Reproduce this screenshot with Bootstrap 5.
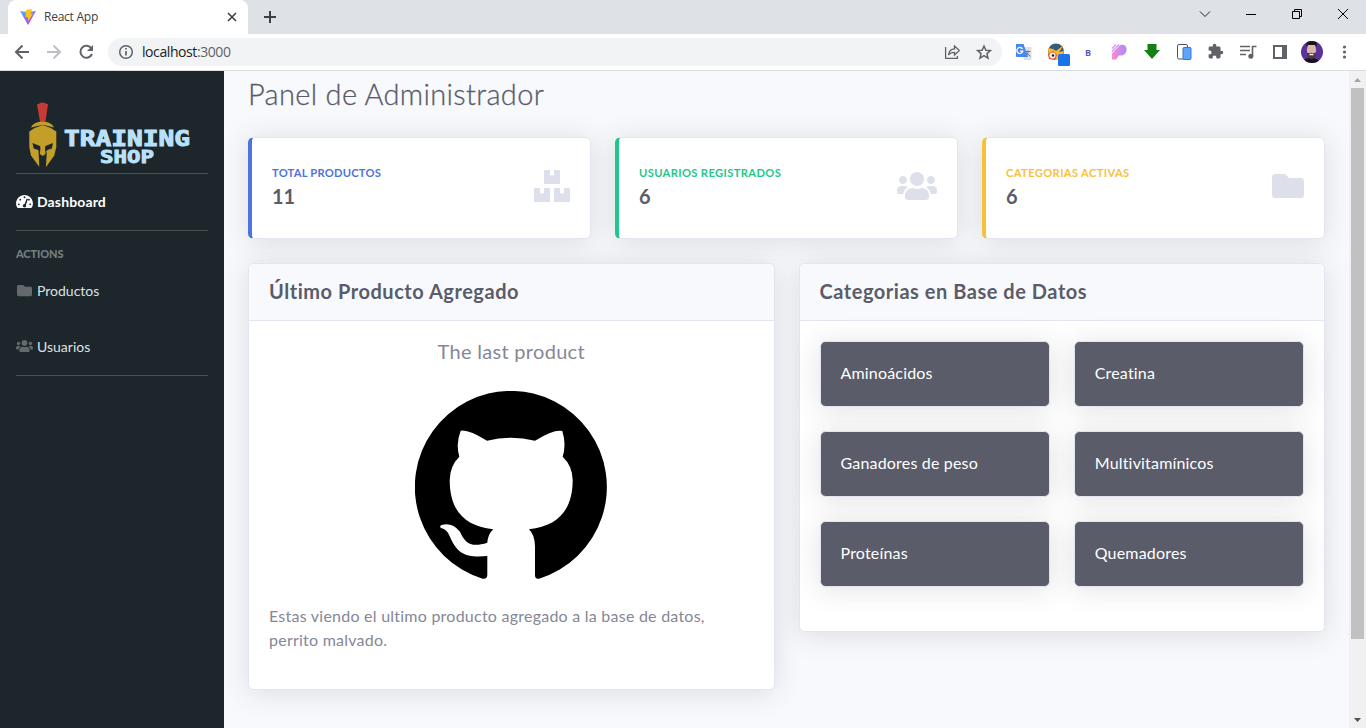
<!DOCTYPE html>
<html lang="es">
<head>
<meta charset="utf-8">
<title>React App</title>
<link href="https://cdn.jsdelivr.net/npm/bootstrap@5.3.0/dist/css/bootstrap.min.css" rel="stylesheet">
<style>
html,body{height:100%;overflow:hidden}
body{font-family:Lato,sans-serif;color:#858796;background:#f8f9fc;line-height:1.5}
svg{display:block;flex:none}
.browser{font-family:"Open Sans",sans-serif;color:#3c4043}
.tabstrip{height:34px;background:#dee1e6}
.browser-tab{width:240px;height:34px;margin-left:8px;border-radius:8px 8px 0 0;background:#fff;font-size:12px}
.tab-title{letter-spacing:-.25px}
.win{width:46px;height:29px}
.toolbar{height:37px;background:#fff;border-bottom:1px solid #dadce0;padding-right:7px}
.cell{width:32px;height:32px}
.omnibox{height:28px;border-radius:14px;background:#f1f3f4;font-size:14px;color:#202124;margin-right:5px;padding-right:2px}
.url{letter-spacing:-.42px;padding:0 0 1px 2px}
.url-port{color:#5f6368}
.page{height:657px}
.side{width:224px;background:#1c262b;color:#dfe1e2;font-size:14px}
.side hr{margin:0;border-top:1px solid #495155;opacity:1}
.side .nav-link{color:#dfe1e2;padding:0 0 2px;height:56px}
.side .nav-link.active{color:#fff;font-weight:700;letter-spacing:.14px}
.actions{height:32px;padding-top:14px;font-size:11px;font-weight:900;line-height:17px;color:#777d80;letter-spacing:-.1px}
.content{padding:0 24px}
.page-title{font-size:29px;font-weight:300;color:#5a5c69;line-height:34px;letter-spacing:.32px;margin:6px 0 26px;-webkit-text-stroke:.3px #5a5c69}
.panel{border:1px solid #e3e6f0;border-radius:.35rem;box-shadow:0 .15rem 1.75rem 0 rgba(58,59,69,.15)}
.stat{height:102px;border-left-width:4px}
.stat .card-body{padding:0 20px 4px}
.stat-blue{border-left-color:#4e73df}.stat-blue .stat-label{color:#4e73df;letter-spacing:.2px}
.stat-green{border-left-color:#1cc88a}.stat-green .stat-label{color:#1cc88a}
.stat-yellow{border-left-color:#f6c23e}.stat-yellow .stat-label{color:#f6c23e}
.stat-label{font-size:11.2px;font-weight:700;line-height:17px;letter-spacing:.35px}
.stat-value{font-size:20px;font-weight:700;color:#5a5c69;line-height:24px;margin-top:3px}
.stat svg{fill:#dddfeb}
.panel .card-header{height:57px;background:#f8f9fc;border-color:#e3e6f0;padding:0 20px 2px}
.panel .card-header h5{font-size:20px;font-weight:700;color:#5a5c69;letter-spacing:.53px}
.panel-body{padding:20px}
.product-name{font-size:20px;line-height:24px;letter-spacing:.3px;margin:-2px 0 28px}
.product-text{font-size:16px;letter-spacing:.24px;margin:21px 0 0}
.cat{height:66px;background:#5a5c69;color:#fff;font-size:16px;letter-spacing:.18px;padding:0 20px 2px}
.last{height:427px}.cats{height:369px}
.sbar{width:17px;background:#f1f1f1}
.thumb{width:13px;height:551px;background:#c1c1c1}
</style>
</head>
<body>
<div class="browser">
  <div class="tabstrip d-flex">
    <div class="browser-tab d-flex align-items-center ps-2">
      <svg class="ms-1" width="16" height="16" viewBox="0 0 16 16"><defs><linearGradient id="v" x1="0" x2=".7" y2="1"><stop stop-color="#41bdff"/><stop offset="1" stop-color="#bd34fe"/></linearGradient></defs><path d="M0 2l8 1 8-1-8 14z" fill="url(#v)"/><path d="M6 1l6-1-1.500 4.500H13L8 12.500V8H5.500z" fill="#ffc21c"/></svg>
      <span class="tab-title ms-2 flex-grow-1">React App</span>
      <svg class="me-2" width="16" height="16" stroke="#3c4043" stroke-width="1.600"><path d="M4 4l8 8M12 4l-8 8"/></svg>
    </div>
    <svg width="44" height="34" stroke="#3c4043" stroke-width="2"><path d="M16 17h12M22 11v12"/></svg>
    <div class="ms-auto d-flex">
      <svg class="win" fill="none" stroke="#222"><path d="M18 11.500l5 5 5-5"/></svg>
      <svg class="win" fill="none" stroke="#000"><path d="M18 14.500h10"/></svg>
      <svg class="win" fill="none" stroke="#000"><path d="M18.500 11.500h7v7h-7zM20.500 11V9.500h7v7H26"/></svg>
      <svg class="win" fill="none" stroke="#000"><path d="M18 9l10 10M28 9L18 19"/></svg>
    </div>
  </div>
  <div class="toolbar d-flex align-items-center">
    <div class="d-flex ps-2 ms-n1">
      <svg class="cell" viewBox="2 0 32 32" fill="none" stroke="#5f6368" stroke-width="2"><path d="M23 16H10M16.500 9.500L10 16l6.500 6.500"/></svg>
      <svg class="cell" viewBox="2 0 32 32" fill="none" stroke="#bdc1c6" stroke-width="2"><path d="M9 16h13M15.500 9.500L22 16l-6.500 6.500"/></svg>
      <svg class="cell" viewBox="2 0 32 32" fill="none" stroke="#5f6368" stroke-width="2"><path d="M21.500 12.500A6 6 0 1 0 22 18"/><path d="M23 9v6h-6z" fill="#5f6368" stroke="none"/></svg>
    </div>
    <div class="omnibox d-flex align-items-center flex-grow-1 ms-1">
      <svg class="ms-1" width="28" height="28" fill="none" stroke="#5f6368" stroke-width="1.500"><circle cx="14" cy="14" r="6.300"/><path d="M14 13v4.500M14 10v1.600" stroke-width="1.700"/></svg>
      <span class="url">localhost<span class="url-port">:3000</span></span>
      <div class="ms-auto d-flex">
        <svg class="cell" fill="none" stroke="#5f6368" stroke-width="1.300"><path d="M9.600 11v11.400h11.800V20M12.500 19c.5-4 2.500-6 6-6.200V10l4.800 4.600-4.800 4.400v-2.700c-3 0-4.800.8-6 2.700z"/></svg>
        <svg class="cell" fill="none" stroke="#5f6368" stroke-width="1.500"><path d="M16 10l1.900 4.200 4.500.4-3.400 3 1 4.500-4-2.400-4 2.400 1-4.500-3.400-3 4.500-.4z"/></svg>
      </div>
    </div>
    <div class="d-flex">
      <svg class="cell"><path d="M14 11h10.500v13H17z" fill="#dfe1e5"/><path d="M9 8h7.500l4.500 13H10a1 1 0 0 1-1-1z" fill="#4688f1"/><path d="M15.500 13a3 3 0 1 0 .3 2.200H13" fill="none" stroke="#fff" stroke-width="1.300"/><path d="M18.500 15.500h5M21 14.500v1c0 2-1 4-2 5M19.500 16.500l4 4" stroke="#607d8b" fill="none"/></svg>
      <svg class="cell"><circle cx="17" cy="15.500" r="8" fill="#355e76"/><path d="M9 12l5 1 3 2 8-6-5 7 5-1-3 8H10z" fill="#fcba2b"/><path d="M9 18l5-3 4 4-2 5-6-1z" fill="#e8492f"/><circle cx="13.500" cy="19.500" r="3" fill="#fff"/><circle cx="14" cy="19.500" r="1.300" fill="#222"/><rect x="19" y="18" width="12" height="12" rx="1.500" fill="#1a73e8"/></svg>
      <svg class="cell"><text x="14" y="19.500" font-size="9" font-weight="700" fill="#6259ba">B</text></svg>
      <svg class="cell"><defs><linearGradient id="p"><stop stop-color="#ff8ad1"/><stop offset="1" stop-color="#a68bfa"/></linearGradient></defs><path d="M9 23.500V17.500l8-8.500c4-1 7 1 6.500 5-.5 4-3.500 6-7.500 5.500l-3 4z" fill="url(#p)"/><path d="M9 15.500l7-7M9 12.500l4-4" stroke="#d69cf0" stroke-width="1.500"/></svg>
      <svg class="cell"><path d="M12.500 8h9v6H25l-8 9-8-9h3.500z" fill="#128012"/></svg>
      <svg class="cell"><rect x="10.500" y="8.500" width="10" height="14.500" rx="1.500" fill="#fff" stroke="#44546f"/><rect x="16" y="11.500" width="8" height="12" rx="1" fill="#5da4fa" stroke="#3d77c6"/></svg>
      <svg class="cell" viewBox="-5 -4 32 32"><path transform="translate(3.200 3) scale(.7)" fill="#5f6368" d="M20.500 11H19V7a2 2 0 0 0-2-2h-4V3.500a2.500 2.500 0 0 0-5 0V5H4a2 2 0 0 0-2 2v3.800h1.500a2.700 2.700 0 0 1 0 5.400H2V20a2 2 0 0 0 2 2h3.800v-1.500a2.700 2.700 0 0 1 5.400 0V22H17a2 2 0 0 0 2-2v-4h1.500a2.500 2.500 0 0 0 0-5z"/></svg>
      <svg class="cell" fill="none" stroke="#5f6368" stroke-width="1.600"><path d="M9 10.500h10M9 14.500h10M9 18.500h6M21.500 20.500V10.500h4"/><circle cx="19.800" cy="20.300" r="1.700" fill="#5f6368"/></svg>
      <svg class="cell"><path d="M10 9h14v14H10z" fill="#5f6368"/><path d="M12 11h7v10h-7z" fill="#fff"/></svg>
      <svg class="cell"><clipPath id="av"><circle cx="17" cy="16" r="11"/></clipPath><g clip-path="url(#av)"><path d="M6 5h22v22H6z" fill="#5c3199"/><path d="M7 28c1-5 5-6 9-6s8 1 10 6z" fill="#17131c"/><ellipse cx="16.500" cy="14" rx="4.600" ry="7" fill="#dcb7a5"/><path d="M11.500 11c-1-5 2-7 6-6 4 0 5 2 4 6l-1-2h-8z" fill="#1b151b"/><path d="M12 16c.5 1.500 1.500 1 4.500.8 3 .2 4 .7 4.500-.8 0 5-2 7-4.500 7s-4.500-2-4.500-7z" fill="#4a3836"/><path d="M14.500 18.500h4" stroke="#fff" stroke-width="1.500"/></g></svg>
      <svg class="cell" viewBox="-.5 0 32 32" fill="#5f6368"><circle cx="17" cy="11" r="1.600"/><circle cx="17" cy="16" r="1.600"/><circle cx="17" cy="21" r="1.600"/></svg>
    </div>
  </div>
</div>
<div class="page d-flex">
  <aside class="side flex-shrink-0 px-3">
    <svg width="192" height="102" viewBox="16 71 192 102">
      <path d="M37 104.500l2.500-1 .5-.8h5l.5.8 2.500.7-2.500 17.300h-5.500z" fill="#c83a34"/>
      <path d="M31 127.500c1.500-3.500 6-6 11.500-6s10 2.500 11.500 6l-11-2.800z" fill="#c39e28"/>
      <path d="M29.300 131.500q6-4.500 13.400-6.500 7.500 2 13.600 6.500V147l-2 8.500-8.600 12v-13l-3 1.500-3-1.500v13l-8.700-12-1.700-8.500z" fill="#c39e28"/>
      <path d="M32.500 143l7.500 3 1.500 4-.8 2.500-1.500 0-1-2.500-4.500-1.500zM53 143l-7.500 3-1.500 4 .8 2.500 1.500 0 1-2.500 4.500-1.500zM38.500 150.500l4.200 4.800 4.200-4.800-1 17h-6.500z" fill="#1c262b"/>
      <path d="M41 143h3.400l1.100 11-2.800 2-2.800-2z" fill="#c39e28"/>
      <g fill="#b9e1fc" stroke="#b9e1fc" font-family="DejaVu Sans Mono,monospace" font-weight="700"><text x="64" y="145.500" font-size="21" stroke-width="1" textLength="126" lengthAdjust="spacingAndGlyphs">TRAINING</text><text x="100" y="163" font-size="18" stroke-width=".9" textLength="54" lengthAdjust="spacingAndGlyphs">SHOP</text></g>
    </svg>
    <hr>
    <a class="nav-link active d-flex align-items-center gap-1"><svg width="17" height="15" viewBox="0 0 576 512"><path fill="#fff" d="M288 32C128.940 32 0 160.940 0 320c0 52.800 14.250 102.260 39.060 144.800 5.610 9.620 16.300 15.200 27.440 15.200h443c11.140 0 21.830-5.580 27.440-15.200C561.750 422.260 576 372.800 576 320 576 160.940 447.060 32 288 32z"/><g fill="#1c262b"><circle cx="288" cy="112" r="32"/><circle cx="96" cy="352" r="32"/><circle cx="144" cy="192" r="32"/><circle cx="440" cy="192" r="32"/><circle cx="480" cy="352" r="32"/><circle cx="288" cy="400" r="58"/><path d="M275 380l85-225 45 15-75 225z"/></g></svg><span>Dashboard</span></a>
    <hr>
    <div class="actions">ACTIONS</div>
    <a class="nav-link d-flex align-items-center gap-1"><svg width="17" height="15" viewBox="0 0 512 512" fill="#64696d"><path d="M464 128H272l-64-64H48C21.490 64 0 85.490 0 112v288c0 26.510 21.490 48 48 48h416c26.510 0 48-21.490 48-48V176c0-26.510-21.490-48-48-48z"/></svg><span>Productos</span></a>
    <a class="nav-link d-flex align-items-center gap-1"><svg width="17" height="14" viewBox="0 0 640 512" fill="#64696d"><path id="users" d="M96 224c35.300 0 64-28.700 64-64s-28.700-64-64-64-64 28.700-64 64 28.700 64 64 64zm448 0c35.300 0 64-28.700 64-64s-28.700-64-64-64-64 28.700-64 64 28.700 64 64 64zm32 32h-64c-17.600 0-33.500 7.100-45.100 18.600 40.300 22.100 68.900 62 75.100 109.400h66c17.700 0 32-14.300 32-32v-32c0-35.300-28.700-64-64-64zm-256 0c61.900 0 112-50.100 112-112S381.900 32 320 32 208 82.100 208 144s50.100 112 112 112zm76.800 32h-8.300c-20.800 10-43.900 16-68.500 16s-47.600-6-68.500-16h-8.300C179.600 288 128 339.600 128 403.200V432c0 26.500 21.500 48 48 48h288c26.500 0 48-21.500 48-48v-28.800c0-63.600-51.600-115.200-115.200-115.200zm-223.700-13.400C161.500 263.100 145.600 256 128 256H64c-35.300 0-64 28.700-64 64v32c0 17.700 14.300 32 32 32h65.900c6.300-47.400 34.900-87.300 75.200-109.400z"/></svg><span>Usuarios</span></a>
    <hr>
  </aside>
  <main class="content flex-grow-1">
    <h1 class="page-title">Panel de Administrador</h1>
    <div class="row mb-4">
      <div class="col-4"><div class="card panel stat stat-blue"><div class="card-body d-flex align-items-center justify-content-between"><div><div class="stat-label">TOTAL PRODUCTOS</div><div class="stat-value">11</div></div>
        <svg width="36" height="32" viewBox="0 0 576 512"><path d="M560 288h-80v96l-32-21.300-32 21.300v-96h-80c-8.800 0-16 7.200-16 16v192c0 8.800 7.200 16 16 16h224c8.800 0 16-7.200 16-16V304c0-8.800-7.200-16-16-16zm-384-64h224c8.800 0 16-7.200 16-16V16c0-8.800-7.200-16-16-16h-80v96l-32-21.300L256 96V0h-80c-8.800 0-16 7.200-16 16v192c0 8.800 7.200 16 16 16zm64 64h-80v96l-32-21.300L96 384v-96H16c-8.800 0-16 7.200-16 16v192c0 8.800 7.200 16 16 16h224c8.800 0 16-7.200 16-16V304c0-8.800-7.200-16-16-16z"/></svg></div></div></div>
      <div class="col-4"><div class="card panel stat stat-green"><div class="card-body d-flex align-items-center justify-content-between"><div><div class="stat-label">USUARIOS REGISTRADOS</div><div class="stat-value">6</div></div>
        <svg width="40" height="32" viewBox="0 0 640 512"><use href="#users"/></svg></div></div></div>
      <div class="col-4"><div class="card panel stat stat-yellow"><div class="card-body d-flex align-items-center justify-content-between"><div><div class="stat-label">CATEGORIAS ACTIVAS</div><div class="stat-value">6</div></div>
        <svg width="32" height="32" viewBox="0 0 512 512"><path d="M464 128H272l-64-64H48C21.490 64 0 85.490 0 112v288c0 26.510 21.490 48 48 48h416c26.510 0 48-21.490 48-48V176c0-26.510-21.490-48-48-48z"/></svg></div></div></div>
    </div>
    <div class="row">
      <div class="col-6"><div class="card panel last">
        <div class="card-header d-flex align-items-center"><h5 class="m-0">Último Producto Agregado</h5></div>
        <div class="panel-body">
          <div class="product-name text-center">The last product</div>
          <svg class="mx-auto" width="192" height="192" viewBox="0 0 192 192"><path d="M124 187.700Q120 188.500 120 184V155.700Q120 144 114 138.300C144 135 157.700 118 157.700 89Q157.500 75 147.700 65.700Q151.500 53 147.300 40Q139 38 120 49.700Q96 43.700 72 49.700Q53 38 45.700 39.700Q40.500 53 44.300 65.700Q34.900 75 34.700 89C34.700 118 48 135 78.300 138.300Q73 143 72.300 151.700C56 157 50 152 45 140.700Q37 131 26.700 134Q24 135 26 137Q32 138 35 145.700C42 163 52 167 72.300 165V184Q72 188.500 67.700 187.700A96 96 0 1 1 124 187.700z"/></svg>
          <p class="product-text">Estas viendo el ultimo producto agregado a la base de datos, perrito malvado.</p>
        </div></div></div>
      <div class="col-6"><div class="card panel cats">
        <div class="card-header d-flex align-items-center"><h5 class="m-0">Categorias en Base de Datos</h5></div>
        <div class="panel-body"><div class="row gy-4">
          <div class="col-6"><div class="panel cat d-flex align-items-center">Aminoácidos</div></div>
          <div class="col-6"><div class="panel cat d-flex align-items-center">Creatina</div></div>
          <div class="col-6"><div class="panel cat d-flex align-items-center">Ganadores de peso</div></div>
          <div class="col-6"><div class="panel cat d-flex align-items-center">Multivitamínicos</div></div>
          <div class="col-6"><div class="panel cat d-flex align-items-center">Proteínas</div></div>
          <div class="col-6"><div class="panel cat d-flex align-items-center">Quemadores</div></div>
        </div></div></div></div>
    </div>
  </main>
  <div class="sbar d-flex flex-column align-items-center justify-content-between">
    <svg width="17" height="17" fill="#a3a3a3"><path d="M5 11l3.500-4 3.500 4z"/></svg>
    <div class="thumb mb-auto"></div>
    <svg width="17" height="17" fill="#505050"><path d="M5 7l3.500 4L12 7z"/></svg>
  </div>
</div>
<script src="https://cdn.jsdelivr.net/npm/bootstrap@5.3.0/dist/js/bootstrap.bundle.min.js"></script>
</body>
</html>
